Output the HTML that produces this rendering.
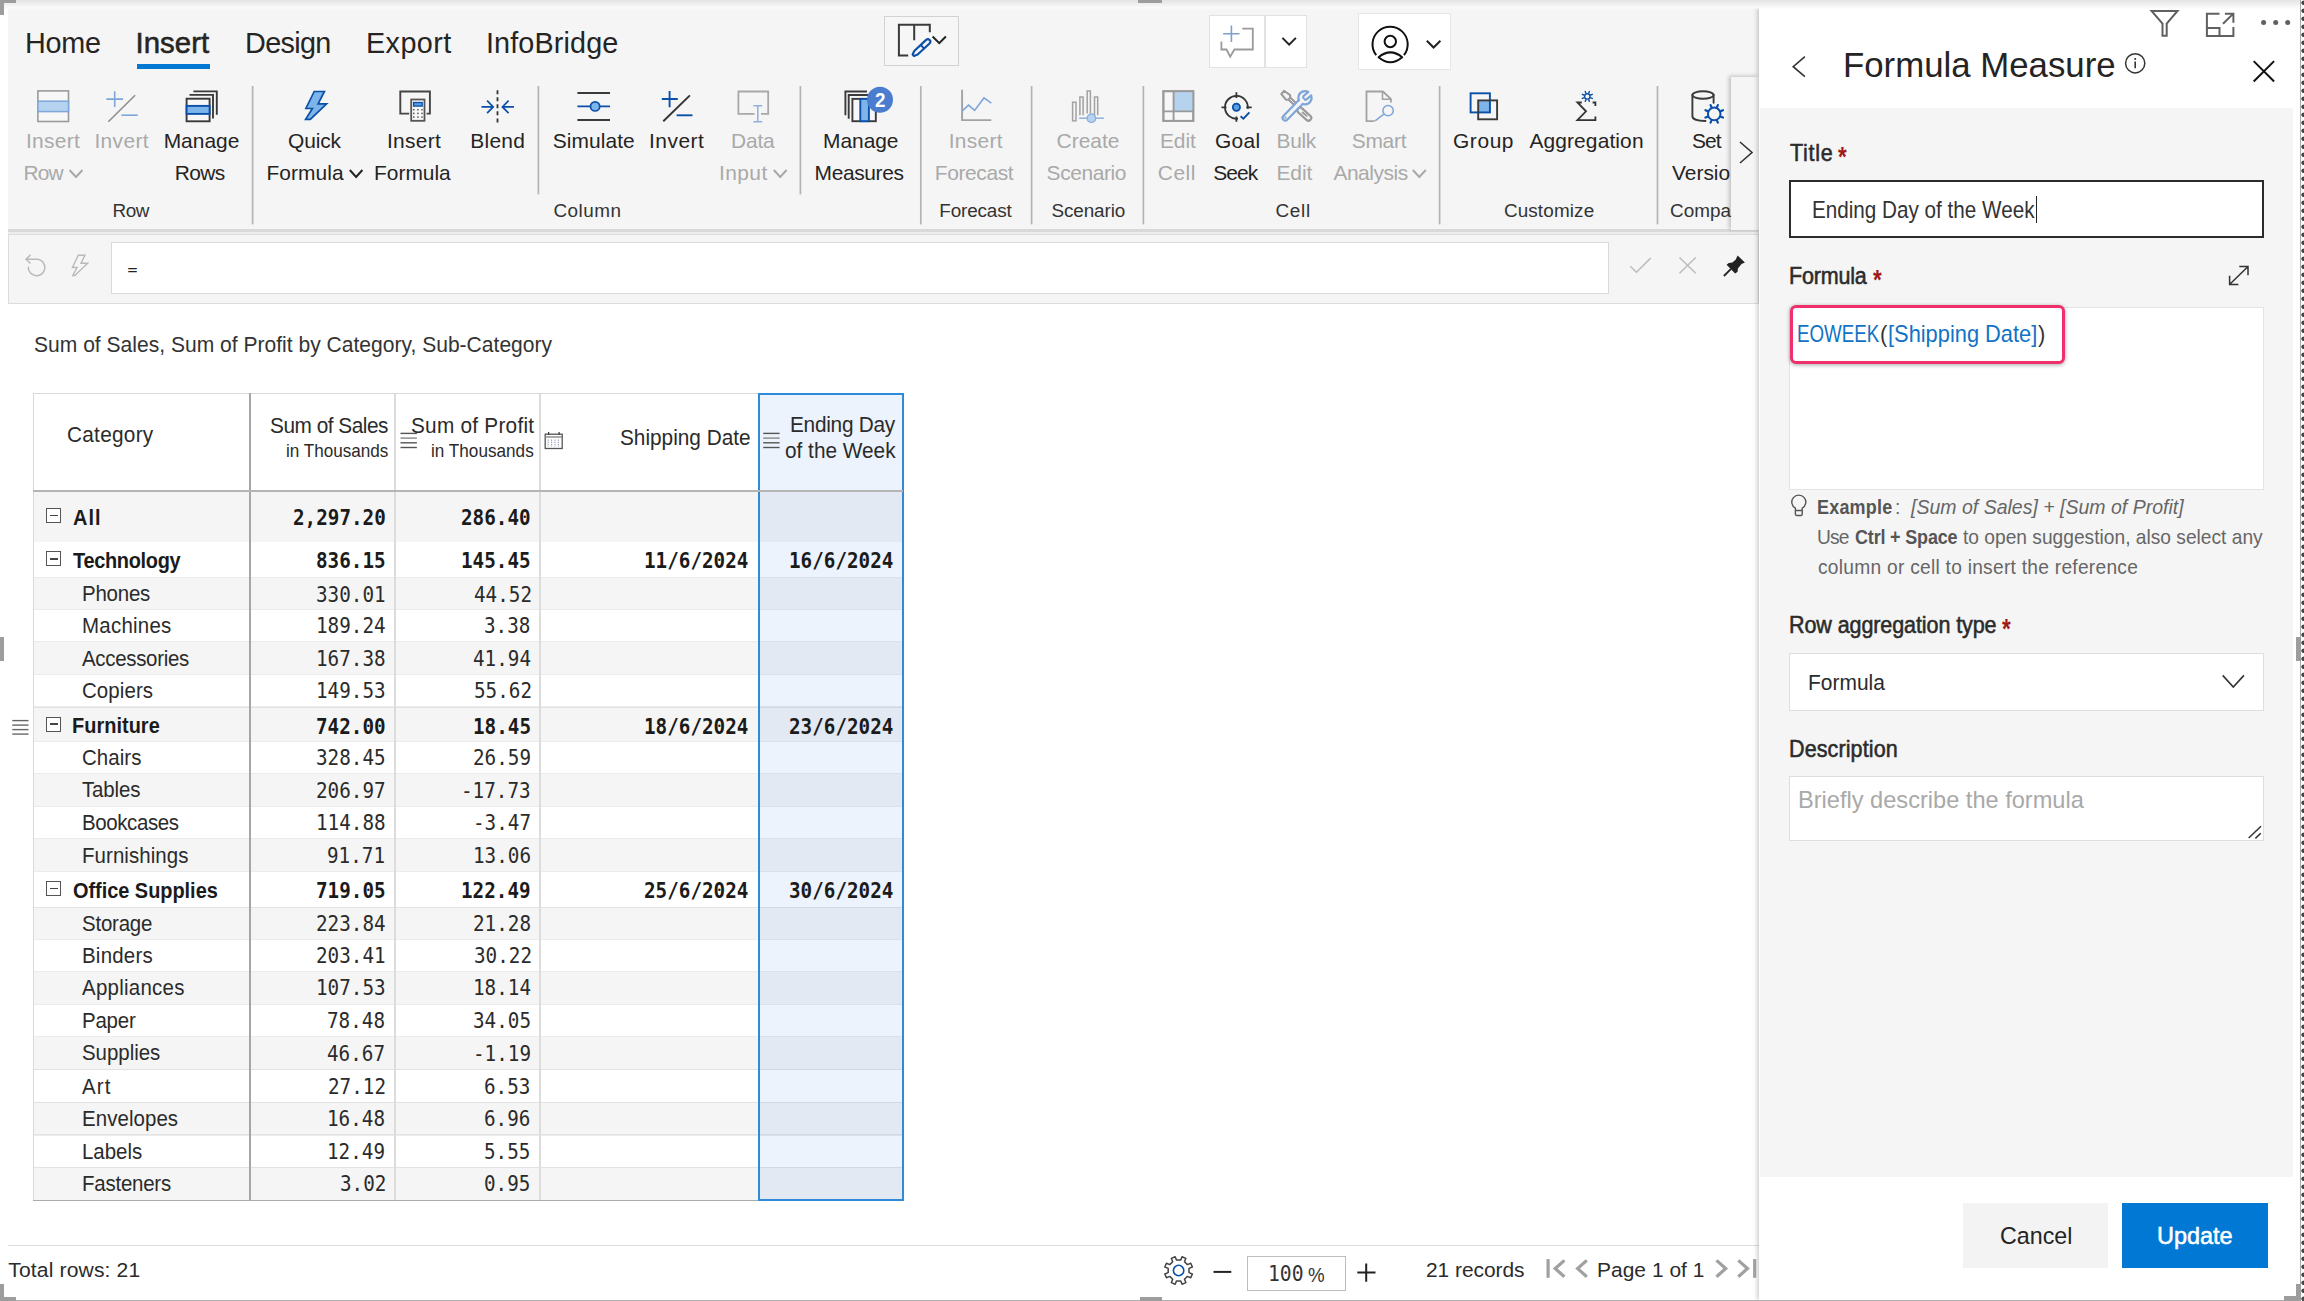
<!DOCTYPE html>
<html lang="en"><head><meta charset="utf-8"><title>Formula Measure</title>
<style>
html,body{margin:0;padding:0;background:#fff;}
body{width:2304px;height:1301px;overflow:hidden;font-family:"Liberation Sans",sans-serif;}
#root{position:relative;width:2304px;height:1301px;overflow:hidden;background:#fff;}
#root div{position:absolute;box-sizing:border-box;}
#ico{position:absolute;left:0;top:0;}
.t{white-space:nowrap;line-height:1;transform-origin:0 50%;}
.sep{width:1.6px;background:#c4c4c4;}
.hd{background:#9d9d9d;}

</style></head>
<body>
<div id="root">
<!-- top inner shadow -->
<div style="left:0;top:0;width:2304px;height:9.5px;background:linear-gradient(#e4e4e4,#efefef 40%,#fafafa 75%,#fff);"></div>
<!-- ribbon -->
<div id="ribbon" style="left:7.5px;top:6.5px;width:1751.5px;height:223.5px;background:#f5f5f5;"></div>
<div style="left:7.5px;top:229px;width:1751.5px;height:2.5px;background:#d9d9d9;"></div>
<div style="left:7.5px;top:231.5px;width:1751.5px;height:2px;background:#ececec;"></div>
<!-- formula bar -->
<div id="fbar" style="left:7.5px;top:233.5px;width:1751.5px;height:70px;background:#f5f5f5;border:1.5px solid #dcdcdc;"></div>
<div id="finput" style="left:110.5px;top:242px;width:1498px;height:52px;background:#fff;border:1.5px solid #dadada;"></div>
<!-- ribbon separators -->
<!-- tab underline -->
<div style="left:137px;top:63.5px;width:72.5px;height:5px;background:#0078d4;"></div>
<!-- top buttons -->
<div style="left:884px;top:16px;width:75px;height:49.5px;border:1.5px solid #d2d2d2;background:#f6f6f6;"></div>
<div style="left:1208.5px;top:15px;width:98px;height:52.8px;border:1.5px solid #e2e2e2;background:#fff;"></div>
<div style="left:1264px;top:16px;width:1.5px;height:51px;background:#e2e2e2;"></div>
<div style="left:1358px;top:13px;width:93px;height:57px;border:1.5px solid #e6e6e6;background:#fff;"></div>
<!-- ribbon scroll arrow -->
<div style="left:1731px;top:77px;width:28px;height:153px;background:#f5f5f5;box-shadow:-2px -1px 4px rgba(0,0,0,.22);"></div>
<!-- table -->
<div style="left:33.2px;top:393.2px;width:870.3px;height:807.3999999999999px;background:#fff;"></div>
<div style="left:33.2px;top:491.9px;width:870.3px;height:50.0px;background:#f5f5f5;"></div>
<div style="left:46.4px;top:507.8px;width:15px;height:15px;border:1.6px solid #555;background:#fff;"></div>
<div style="left:50.2px;top:514.5px;width:7.4px;height:1.6px;background:#444;"></div>
<div style="left:46.4px;top:551.4px;width:15px;height:15px;border:1.6px solid #555;background:#fff;"></div>
<div style="left:50.2px;top:558.1px;width:7.4px;height:1.6px;background:#444;"></div>
<div style="left:33.2px;top:577.6px;width:870.3px;height:31.6px;background:#f5f5f5;"></div>
<div style="left:33.2px;top:577.0px;width:870.3px;height:1.3px;background:rgba(0,0,0,.075);"></div>
<div style="left:33.2px;top:608.6px;width:870.3px;height:1.3px;background:rgba(0,0,0,.075);"></div>
<div style="left:33.2px;top:641.8px;width:870.3px;height:32.6px;background:#f5f5f5;"></div>
<div style="left:33.2px;top:641.2px;width:870.3px;height:1.3px;background:rgba(0,0,0,.075);"></div>
<div style="left:33.2px;top:673.8px;width:870.3px;height:1.3px;background:rgba(0,0,0,.075);"></div>
<div style="left:33.2px;top:707px;width:870.3px;height:34.4px;background:#f5f5f5;"></div>
<div style="left:33.2px;top:706.4px;width:870.3px;height:1.3px;background:rgba(0,0,0,.075);"></div>
<div style="left:46.4px;top:716.5px;width:15px;height:15px;border:1.6px solid #555;background:#fff;"></div>
<div style="left:50.2px;top:723.2px;width:7.4px;height:1.6px;background:#444;"></div>
<div style="left:33.2px;top:740.8px;width:870.3px;height:1.3px;background:rgba(0,0,0,.075);"></div>
<div style="left:33.2px;top:773.6px;width:870.3px;height:32.8px;background:#f5f5f5;"></div>
<div style="left:33.2px;top:773.0px;width:870.3px;height:1.3px;background:rgba(0,0,0,.075);"></div>
<div style="left:33.2px;top:805.8px;width:870.3px;height:1.3px;background:rgba(0,0,0,.075);"></div>
<div style="left:33.2px;top:838.7px;width:870.3px;height:32.8px;background:#f5f5f5;"></div>
<div style="left:33.2px;top:838.1px;width:870.3px;height:1.3px;background:rgba(0,0,0,.075);"></div>
<div style="left:33.2px;top:870.9px;width:870.3px;height:1.3px;background:rgba(0,0,0,.075);"></div>
<div style="left:46.4px;top:881.0px;width:15px;height:15px;border:1.6px solid #555;background:#fff;"></div>
<div style="left:50.2px;top:887.7px;width:7.4px;height:1.6px;background:#444;"></div>
<div style="left:33.2px;top:907.3px;width:870.3px;height:31.9px;background:#f5f5f5;"></div>
<div style="left:33.2px;top:906.7px;width:870.3px;height:1.3px;background:rgba(0,0,0,.075);"></div>
<div style="left:33.2px;top:938.6px;width:870.3px;height:1.3px;background:rgba(0,0,0,.075);"></div>
<div style="left:33.2px;top:971.5px;width:870.3px;height:32.8px;background:#f5f5f5;"></div>
<div style="left:33.2px;top:970.9px;width:870.3px;height:1.3px;background:rgba(0,0,0,.075);"></div>
<div style="left:33.2px;top:1003.7px;width:870.3px;height:1.3px;background:rgba(0,0,0,.075);"></div>
<div style="left:33.2px;top:1036.6px;width:870.3px;height:33.2px;background:#f5f5f5;"></div>
<div style="left:33.2px;top:1036.0px;width:870.3px;height:1.3px;background:rgba(0,0,0,.075);"></div>
<div style="left:33.2px;top:1069.2px;width:870.3px;height:1.3px;background:rgba(0,0,0,.075);"></div>
<div style="left:33.2px;top:1102.1px;width:870.3px;height:32.8px;background:#f5f5f5;"></div>
<div style="left:33.2px;top:1101.5px;width:870.3px;height:1.3px;background:rgba(0,0,0,.075);"></div>
<div style="left:33.2px;top:1134.3px;width:870.3px;height:1.3px;background:rgba(0,0,0,.075);"></div>
<div style="left:33.2px;top:1167.2px;width:870.3px;height:32.8px;background:#f5f5f5;"></div>
<div style="left:33.2px;top:1166.6px;width:870.3px;height:1.3px;background:rgba(0,0,0,.075);"></div>
<div style="left:758px;top:393.2px;width:145.5px;height:807.3999999999999px;background:rgba(40,120,215,.085);border:2px solid #2f8bda;"></div>
<div style="left:33.2px;top:393px;width:724.8px;height:1px;background:#d9d9d9;"></div>
<div style="left:33px;top:393.2px;width:1px;height:807.3999999999999px;background:#d9d9d9;"></div>
<div style="left:249px;top:393.2px;width:2px;height:807.3999999999999px;background:#a6a6a6;"></div>
<div style="left:394px;top:393.2px;width:1.5px;height:807.3999999999999px;background:#dcdcdc;"></div>
<div style="left:539.3px;top:393.2px;width:1.5px;height:807.3999999999999px;background:#dcdcdc;"></div>
<div style="left:33.2px;top:490.4px;width:870.3px;height:1.8px;background:#b4b4b4;"></div>
<div style="left:33.2px;top:1199.5px;width:724.8px;height:1.6px;background:#ababab;"></div>
<!-- footer -->
<div style="left:7.5px;top:1244.5px;width:1751.5px;height:1.5px;background:#dedede;"></div>
<div style="left:1247px;top:1255.5px;width:98.5px;height:35.5px;border:1.5px solid #bdbdbd;background:#fff;"></div>
<!-- panel -->
<div id="panel" style="left:1759px;top:6px;width:541px;height:1294px;background:#fff;box-shadow:-1px 0 5px rgba(0,0,0,.25);"></div>
<div style="left:0;top:0;width:2304px;height:9.5px;background:linear-gradient(#e4e4e4,#efefef 40%,#fafafa 75%,rgba(255,255,255,0));"></div>
<div id="pbody" style="left:1760px;top:108px;width:533px;height:1068.5px;background:#f5f5f5;"></div>
<!-- title input -->
<div style="left:1788.5px;top:180px;width:475.5px;height:58px;background:#fff;border:2px solid #2b2b2b;"></div>
<div style="left:2035.5px;top:196px;width:1.5px;height:26.5px;background:#222;"></div>
<!-- formula editor -->
<div style="left:1789px;top:307px;width:474.5px;height:183px;background:#fff;border:1.5px solid #e3e3e3;"></div>
<div style="left:1789.5px;top:305px;width:275.5px;height:58.5px;background:#fff;border:3px solid #f0306a;border-radius:6px;box-shadow:0 1px 4px rgba(0,0,0,.35);"></div>
<!-- select -->
<div style="left:1788.5px;top:653px;width:475.5px;height:57.5px;background:#fff;border:1.5px solid #dedede;"></div>
<!-- textarea -->
<div style="left:1788.5px;top:776px;width:475.5px;height:65px;background:#fff;border:1.5px solid #dedede;"></div>
<!-- buttons -->
<div style="left:1962.5px;top:1202.5px;width:145.5px;height:65px;background:#f3f3f3;"></div>
<div style="left:2122px;top:1202.5px;width:145.5px;height:65px;background:#0078d4;"></div>
<!-- frame edges / handles -->
<div style="left:0;top:1299.5px;width:2304px;height:1.5px;background:#b0b0b0;"></div>
<div style="left:2300px;top:0;width:1.2px;height:1301px;background:#aaa;"></div>
<div style="left:2301px;top:0;width:3px;height:1301px;background:radial-gradient(circle at 2.6px 2.8px,#474747 0,#474747 1.9px,rgba(71,71,71,0) 2.6px) 0 0/3px 8px repeat-y #fff;"></div>
<div class="hd" style="left:1138px;top:0;width:24px;height:2.8px;"></div>
<div class="hd" style="left:1140px;top:1296.7px;width:22px;height:4.3px;"></div>
<div class="hd" style="left:0;top:637.3px;width:3.5px;height:23.7px;"></div>
<div class="hd" style="left:2295.7px;top:637.3px;width:5.2px;height:23.7px;"></div>
<div class="hd" style="left:0;top:0;width:15.7px;height:3px;"></div>
<div class="hd" style="left:0;top:0;width:3.7px;height:14.6px;"></div>
<div class="hd" style="left:0;top:1296.5px;width:15.6px;height:4.5px;"></div>
<div class="hd" style="left:0;top:1284px;width:4.3px;height:17px;"></div>
<div class="hd" style="left:2283.6px;top:1296.3px;width:17.3px;height:4.7px;"></div>
<div class="hd" style="left:2295.6px;top:1284.3px;width:5.3px;height:16.7px;"></div>

<svg id="ico" width="2304" height="1301" viewBox="0 0 2304 1301" fill="none">
<path d="M252.6 86V224.4" stroke="#b4b4b4" stroke-width="1.7"/>
<path d="M920.8 86V224.4" stroke="#b4b4b4" stroke-width="1.7"/>
<path d="M1031.6 86V224.4" stroke="#b4b4b4" stroke-width="1.7"/>
<path d="M1143.4 86V224.4" stroke="#b4b4b4" stroke-width="1.7"/>
<path d="M1439.6 86V224.4" stroke="#b4b4b4" stroke-width="1.7"/>
<path d="M1657.5 86V224.4" stroke="#b4b4b4" stroke-width="1.7"/>
<path d="M538.4 86V194.4" stroke="#b4b4b4" stroke-width="1.7"/>
<path d="M800.4 86V194.4" stroke="#b4b4b4" stroke-width="1.7"/>
<rect x="37.9" y="90.9" width="30.6" height="30.6" fill="#f7f7f7" stroke="#9a9a9a" stroke-width="1.6"/>
<rect x="37.9" y="101.2" width="30.6" height="10.4" fill="#b5d3ee" stroke="#7ea6d8" stroke-width="1.5"/>
<path d="M106.4 99.1H123M114.7 91.2V107" stroke="#7ea6d8" stroke-width="1.6"/>
<path d="M108.3 121.7L135.1 95.3" stroke="#8f8f8f" stroke-width="1.6"/>
<path d="M121.4 115.2H137.7" stroke="#7ea6d8" stroke-width="1.6"/>
<path d="M193.4 91.4H216.8V114.8" stroke="#3a3a3a" stroke-width="1.9"/>
<path d="M189.5 94.9H213V118.4" stroke="#3a3a3a" stroke-width="1.9"/>
<rect x="186.6" y="98.7" width="23" height="22.6" fill="#f7f7f7" stroke="#3a3a3a" stroke-width="1.9"/>
<rect x="186.6" y="105.9" width="23" height="8" fill="#7db4ea" stroke="#0a4fa8" stroke-width="1.9"/>
<path d="M314.2 91.5H324.4L318.1 103.8H326.6L310.3 119.4H305.6L312.4 108.5H305.9Z" fill="#7db4ea" stroke="#0a4fa8" stroke-width="1.7" stroke-linejoin="miter"/>
<path d="M409.2 113.6H400.3V91.5H429.9V113.6H426.6" stroke="#444" stroke-width="1.9"/>
<rect x="411.2" y="99.5" width="13.3" height="21.3" fill="#f8f8f8" stroke="#555" stroke-width="1.8"/>
<rect x="413.6" y="102.5" width="8.6" height="3.6" fill="#5b9be0" stroke="#0a4fa8" stroke-width="1.3"/>
<rect x="413.05" y="108.95" width="1.5" height="1.5" fill="#555"/>
<rect x="417.15" y="108.95" width="1.5" height="1.5" fill="#555"/>
<rect x="421.25" y="108.95" width="1.5" height="1.5" fill="#555"/>
<rect x="413.05" y="112.65" width="1.5" height="1.5" fill="#555"/>
<rect x="417.15" y="112.65" width="1.5" height="1.5" fill="#555"/>
<rect x="421.25" y="112.65" width="1.5" height="1.5" fill="#555"/>
<rect x="413.05" y="116.35" width="1.5" height="1.5" fill="#555"/>
<rect x="417.15" y="116.35" width="1.5" height="1.5" fill="#555"/>
<rect x="421.25" y="116.35" width="1.5" height="1.5" fill="#555"/>
<path d="M497.5 90.2V122.5" stroke="#333" stroke-width="1.8" stroke-dasharray="4 3.05"/>
<path d="M481.5 106.9H493M487.1 100.7L493.2 106.9L487.1 113.1" stroke="#0a4fa8" stroke-width="1.7"/>
<path d="M514 106.9H502.5M508.6 100.7L502.4 106.9L508.6 113.1" stroke="#0a4fa8" stroke-width="1.7"/>
<path d="M577.4 92.9H610M577.4 119.9H610" stroke="#3a3a3a" stroke-width="2"/>
<path d="M577.4 106.4H610" stroke="#0a4fa8" stroke-width="1.8"/>
<circle cx="595.1" cy="106.4" r="4.6" fill="#7db4ea" stroke="#0a4fa8" stroke-width="1.7"/>
<path d="M661.8 99.05H677.8M669.6 91.1V107.3" stroke="#0a4fa8" stroke-width="1.9"/>
<path d="M663.3 121.3L689.9 95.4" stroke="#333" stroke-width="1.9"/>
<path d="M676.6 115.3H692.5" stroke="#0a4fa8" stroke-width="1.9"/>
<path d="M754.5 113.9H738.4V91.5H768.2V113.9H761" stroke="#a8a8a8" stroke-width="1.8"/>
<path d="M757.8 105.6V121.8M753.4 105.8H762.2M753.4 121.7H762.2" stroke="#8fb0dc" stroke-width="1.5"/>
<path d="M845.4 115.3V91.5H867" stroke="#3a3a3a" stroke-width="1.9"/>
<path d="M848.7 118.7V95H870" stroke="#3a3a3a" stroke-width="1.9"/>
<rect x="852.4" y="98.9" width="23.4" height="22.3" fill="#f7f7f7" stroke="#3a3a3a" stroke-width="1.9"/>
<rect x="860.3" y="98.9" width="8.6" height="22.3" fill="#7db4ea" stroke="#0a4fa8" stroke-width="1.9"/>
<circle cx="880" cy="99.7" r="13" fill="#4a7dcf"/>
<path d="M962.1 89.8V120.1H991.3" stroke="#a2a2a2" stroke-width="1.9"/>
<path d="M962.1 111.1L968.5 105.1L974.6 110.4L984 97.9L991.3 103.2" stroke="#7ea6d8" stroke-width="1.6"/>
<rect x="1072.6" y="102.2" width="3.4" height="18.6" stroke="#a2a2a2" stroke-width="1.5"/>
<path d="M1079.9 115.2V97H1083.1V115.2" stroke="#a2a2a2" stroke-width="1.5"/>
<path d="M1087.2 113.5V91H1090.4V113.5" stroke="#a2a2a2" stroke-width="1.5"/>
<path d="M1094.5 115.2V97H1097.7V115.2" stroke="#a2a2a2" stroke-width="1.5"/>
<path d="M1079.2 118.2H1103.9" stroke="#8fb0dc" stroke-width="1.5"/>
<circle cx="1091.4" cy="118.2" r="4.2" fill="#b5d3ee" stroke="#8fb0dc" stroke-width="1.4"/>
<rect x="1163.4" y="91.2" width="29.9" height="29.7" fill="#f7f7f7" stroke="#9a9a9a" stroke-width="1.9"/>
<rect x="1173.6" y="91.2" width="19.7" height="20.2" fill="#b5d3ee"/>
<path d="M1173.6 91.2V120.9M1163.4 111.4H1193.3" stroke="#9a9a9a" stroke-width="1.9"/>
<rect x="1163.4" y="91.2" width="29.9" height="29.7" stroke="#9a9a9a" stroke-width="1.9"/>
<path d="M1238 118.6A11.4 11.4 0 1 1 1247.7 108.9" stroke="#333" stroke-width="1.8" transform="rotate(0)"/>
<path d="M1236.4 92.3V98M1221.5 107.3H1226.5M1246.4 107.3H1251.7M1236.4 116.5V121.8" stroke="#333" stroke-width="1.8"/>
<circle cx="1236.4" cy="107.3" r="3.6" fill="#5b9be0" stroke="#0a4fa8" stroke-width="1.8"/>
<path d="M1240.6 116.2L1243.4 118.6L1249.4 112.4" stroke="#0a4fa8" stroke-width="1.9"/>
<path d="M1288.5 97.8L1297.5 106.2" stroke="#9a9a9a" stroke-width="4.6" stroke-linecap="butt"/>
<path d="M1287.5 96.8L1298 106.6" stroke="#f5f5f5" stroke-width="1" stroke-linecap="butt"/>
<path d="M1281.3 94L1284 90.8L1290.1 95.1L1290.3 97.6L1288.4 99.7L1285.9 99.7Z" fill="#f5f5f5" stroke="#9a9a9a" stroke-width="2" stroke-linejoin="round"/>
<path d="M1300.2 110.4L1308.4 117.8" stroke="#9a9a9a" stroke-width="7.8" stroke-linecap="round"/>
<path d="M1300.2 110.4L1308.4 117.8" stroke="#f5f5f5" stroke-width="3.4" stroke-linecap="round"/>
<path d="M1297.2 106L1299.4 108" stroke="#f5f5f5" stroke-width="2.4" stroke-linecap="butt"/>
<path d="M1302.6 112.5L1306.8 115.9" stroke="#9a9a9a" stroke-width="1.8" stroke-linecap="round"/>
<path d="M1285.3 117.8L1300.6 102.2" stroke="#7ea6d8" stroke-width="7.6" stroke-linecap="round"/>
<path d="M1285.3 117.8L1300.6 102.2" stroke="#f5f5f5" stroke-width="3.2" stroke-linecap="round"/>
<path d="M1308.35 92.01A6.6 6.6 0 1 0 1311.18 95.39L1306.79 99.07A2.2 2.2 0 0 1 1303.97 95.69Z" fill="#f5f5f5" stroke="#7ea6d8" stroke-width="2.2" stroke-linejoin="round"/>
<path d="M1298.2 104.7L1302.4 100.4" stroke="#f5f5f5" stroke-width="3.2" stroke-linecap="round"/>
<circle cx="1285.5" cy="117.7" r="1.1" fill="#7ea6d8"/>
<path d="M1374.5 121.2H1366.5V91.5H1382.9L1390.9 99V102.4" stroke="#a2a2a2" stroke-width="1.8"/>
<path d="M1382.5 91.8V99.3H1390.6" stroke="#a2a2a2" stroke-width="1.5"/>
<circle cx="1388.1" cy="110.6" r="5.2" stroke="#7ea6d8" stroke-width="1.5"/>
<path d="M1383.9 114.2L1375.1 120.9" stroke="#7ea6d8" stroke-width="1.5"/>
<rect x="1478.2" y="100.4" width="12.4" height="12.7" fill="#7db4ea"/>
<rect x="1470.6" y="93.3" width="19.3" height="19.1" stroke="#0a4fa8" stroke-width="1.9"/>
<rect x="1478.2" y="100.4" width="18.9" height="18.9" stroke="#3a3a3a" stroke-width="1.9"/>
<path d="M1581.8 102.5H1577.4L1586 111.3L1577.4 120.1H1595.4V116.6M1592.6 102.5H1595.4V106" stroke="#333" stroke-width="1.8" stroke-linejoin="miter"/>
<circle cx="1587.3" cy="96.4" r="2.7" stroke="#0a4fa8" stroke-width="1.4"/><line x1="1590.72" y1="97.82" x2="1592.29" y2="98.47" stroke="#0a4fa8" stroke-width="1.4" stroke-linecap="round"/><line x1="1588.72" y1="99.82" x2="1589.37" y2="101.39" stroke="#0a4fa8" stroke-width="1.4" stroke-linecap="round"/><line x1="1585.88" y1="99.82" x2="1585.23" y2="101.39" stroke="#0a4fa8" stroke-width="1.4" stroke-linecap="round"/><line x1="1583.88" y1="97.82" x2="1582.31" y2="98.47" stroke="#0a4fa8" stroke-width="1.4" stroke-linecap="round"/><line x1="1583.88" y1="94.98" x2="1582.31" y2="94.33" stroke="#0a4fa8" stroke-width="1.4" stroke-linecap="round"/><line x1="1585.88" y1="92.98" x2="1585.23" y2="91.41" stroke="#0a4fa8" stroke-width="1.4" stroke-linecap="round"/><line x1="1588.72" y1="92.98" x2="1589.37" y2="91.41" stroke="#0a4fa8" stroke-width="1.4" stroke-linecap="round"/><line x1="1590.72" y1="94.98" x2="1592.29" y2="94.33" stroke="#0a4fa8" stroke-width="1.4" stroke-linecap="round"/>
<ellipse cx="1703" cy="95" rx="10.6" ry="3.8" stroke="#3a3a3a" stroke-width="1.9"/>
<path d="M1692.4 95V116.2C1692.4 118.8 1697 120.9 1705.5 121" stroke="#3a3a3a" stroke-width="1.9" stroke-linecap="round"/>
<path d="M1713.6 95V102.8" stroke="#3a3a3a" stroke-width="1.9" stroke-linecap="round"/>
<circle cx="1714.2" cy="113.9" r="6.3" stroke="#0a4fa8" stroke-width="2.0"/><line x1="1720.85" y1="116.66" x2="1722.98" y2="117.54" stroke="#0a4fa8" stroke-width="2.2" stroke-linecap="round"/><line x1="1716.96" y1="120.55" x2="1717.84" y2="122.68" stroke="#0a4fa8" stroke-width="2.2" stroke-linecap="round"/><line x1="1711.44" y1="120.55" x2="1710.56" y2="122.68" stroke="#0a4fa8" stroke-width="2.2" stroke-linecap="round"/><line x1="1707.55" y1="116.66" x2="1705.42" y2="117.54" stroke="#0a4fa8" stroke-width="2.2" stroke-linecap="round"/><line x1="1707.55" y1="111.14" x2="1705.42" y2="110.26" stroke="#0a4fa8" stroke-width="2.2" stroke-linecap="round"/><line x1="1711.44" y1="107.25" x2="1710.56" y2="105.12" stroke="#0a4fa8" stroke-width="2.2" stroke-linecap="round"/><line x1="1716.96" y1="107.25" x2="1717.84" y2="105.12" stroke="#0a4fa8" stroke-width="2.2" stroke-linecap="round"/><line x1="1720.85" y1="111.14" x2="1722.98" y2="110.26" stroke="#0a4fa8" stroke-width="2.2" stroke-linecap="round"/>
<polyline points="69.5,170 76.0,177 82.5,170" stroke="#a9a9a9" stroke-width="2" stroke-linecap="butt" stroke-linejoin="miter"/>
<polyline points="349.8,170 356.1,177 362.4,170" stroke="#252423" stroke-width="2" stroke-linecap="butt" stroke-linejoin="miter"/>
<polyline points="773.8,170 780.2,177 786.6,170" stroke="#a9a9a9" stroke-width="2" stroke-linecap="butt" stroke-linejoin="miter"/>
<polyline points="1412.8,170 1419.3,177 1425.8,170" stroke="#a9a9a9" stroke-width="2" stroke-linecap="butt" stroke-linejoin="miter"/>
<polyline points="1740,142 1752,152.5 1740,163" stroke="#333" stroke-width="1.6"/>
<path d="M908.2 55.6H898.9V24.8H929.8V32.2M914.2 24.8V40.2" stroke="#3a3a3a" stroke-width="2"/>
<g transform="translate(912.6,55.9) rotate(-43)"><path d="M4.6 -2.5L20.8 -2.5A2.5 2.5 0 0 1 20.8 2.5L4.6 2.5L0.9 1L0.9 -1Z" fill="#f5f5f5" stroke="#0a4fa8" stroke-width="2.1" stroke-linejoin="round"/><path d="M13.4 -2.5V2.5" stroke="#0a4fa8" stroke-width="2"/></g>
<polyline points="932.6,36.5 939.25,43.2 945.9,36.5" stroke="#222" stroke-width="2" stroke-linecap="butt" stroke-linejoin="miter"/>
<path d="M1223.1 33.7H1239.5M1231.4 25.5V41.9" stroke="#7f9fd0" stroke-width="1.6"/>
<path d="M1242.3 28.6H1252.8V49.5H1234.4L1230.2 56.7L1226.5 49.5H1221.4V41.6" stroke="#9a9a9a" stroke-width="1.8"/>
<polyline points="1282.4,37.9 1289.15,44.7 1295.9,37.9" stroke="#222" stroke-width="2" stroke-linecap="butt" stroke-linejoin="miter"/>
<path d="M1376.23 55.14A17.6 17.6 0 1 1 1403.97 55.14" stroke="#111" stroke-width="2"/>
<circle cx="1390.3" cy="41.5" r="5.7" stroke="#111" stroke-width="2"/>
<path d="M1378.6 57.2Q1390.3 47.6 1402.2 57.2Q1390.3 67.2 1378.6 57.2Z" stroke="#111" stroke-width="2" stroke-linejoin="round"/>
<polyline points="1426.8,40.7 1433.6,47.5 1440.4,40.7" stroke="#222" stroke-width="2" stroke-linecap="butt" stroke-linejoin="miter"/>
<path d="M28.3 266.8A8.3 8.3 0 1 0 37.5 259.2H26.2M30.6 254.8L26 259.2L30.6 263.5" stroke="#b9b9b9" stroke-width="1.5"/>
<path d="M78.3 255.2H84.9L81 263.2H87.7L74.8 275.5H72.8L77.1 267.5H72.4Z" stroke="#b9b9b9" stroke-width="1.4"/>
<path d="M1630.3 266.3L1636.4 272.3L1650.7 258.1" stroke="#bcbcbc" stroke-width="1.5"/>
<path d="M1679.5 257.5L1695.7 273.3M1695.7 257.5L1679.5 273.3" stroke="#bcbcbc" stroke-width="1.5"/>
<path d="M1737.6 255.6L1744.9 262.6L1741.5 264.1L1737.9 268.4L1737.6 271.7L1735.1 273.6L1726.6 264.7L1728.8 262.9L1732.4 262.6L1735.8 259.6Z" fill="#222"/>
<path d="M1731 268.8L1723.9 276" stroke="#222" stroke-width="1.8"/>
<path d="M400.5 433.4H416.9" stroke="#555" stroke-width="1.4"/><path d="M400.5 438.1H416.9" stroke="#888" stroke-width="1.4"/><path d="M400.5 442.8H416.9" stroke="#555" stroke-width="1.4"/><path d="M400.5 447.5H416.9" stroke="#555" stroke-width="1.4"/>
<path d="M763.2 433.4H779.6" stroke="#555" stroke-width="1.4"/><path d="M763.2 438.1H779.6" stroke="#888" stroke-width="1.4"/><path d="M763.2 442.8H779.6" stroke="#555" stroke-width="1.4"/><path d="M763.2 447.5H779.6" stroke="#555" stroke-width="1.4"/>
<rect x="545.2" y="434.2" width="17" height="14.3" fill="#fff" stroke="#555" stroke-width="1.3"/>
<path d="M545.2 437H562.2" stroke="#888" stroke-width="1.4"/>
<path d="M548.6 432.1V435M559.1 432.1V435" stroke="#444" stroke-width="1.3"/>
<path d="M548.2 439.5V446.8" stroke="#8892b0" stroke-width="1" stroke-dasharray="1.3 1"/>
<path d="M551.6 439.5V446.8" stroke="#8892b0" stroke-width="1" stroke-dasharray="1.3 1"/>
<path d="M555 439.5V446.8" stroke="#8892b0" stroke-width="1" stroke-dasharray="1.3 1"/>
<path d="M558.4 439.5V446.8" stroke="#8892b0" stroke-width="1" stroke-dasharray="1.3 1"/>
<path d="M12.3 720.6H28.5" stroke="#666" stroke-width="1.4"/>
<path d="M12.3 725.1H28.5" stroke="#666" stroke-width="1.4"/>
<path d="M12.3 729.6H28.5" stroke="#666" stroke-width="1.4"/>
<path d="M12.3 734.1H28.5" stroke="#666" stroke-width="1.4"/>
<path d="M1189.00 1272.57L1192.37 1273.95L1190.78 1277.80L1187.41 1276.39L1184.49 1279.31L1185.90 1282.68L1182.05 1284.27L1180.67 1280.90L1176.53 1280.90L1175.15 1284.27L1171.30 1282.68L1172.71 1279.31L1169.79 1276.39L1166.42 1277.80L1164.83 1273.95L1168.20 1272.57L1168.20 1268.43L1164.83 1267.05L1166.42 1263.20L1169.79 1264.61L1172.71 1261.69L1171.30 1258.32L1175.15 1256.73L1176.53 1260.10L1180.67 1260.10L1182.05 1256.73L1185.90 1258.32L1184.49 1261.69L1187.41 1264.61L1190.78 1263.20L1192.37 1267.05L1189.00 1268.43Z" stroke="#444" stroke-width="1.5" stroke-linejoin="round"/>
<circle cx="1178.6" cy="1270.5" r="5.2" stroke="#0a4fa8" stroke-width="1.6"/>
<path d="M1213.5 1271.9H1231.3" stroke="#222" stroke-width="2"/>
<path d="M1357.3 1272.6H1375.5M1366.2 1263.5V1281.7" stroke="#222" stroke-width="2"/>
<path d="M1548.1 1259.1V1277.8" stroke="#a0a0a0" stroke-width="3.2"/>
<polyline points="1564.4,1260.4 1555.2,1268.5 1564.4,1276.8" stroke="#a0a0a0" stroke-width="3.2"/>
<polyline points="1586.8,1260.4 1577.6,1268.5 1586.8,1276.8" stroke="#a0a0a0" stroke-width="3.2"/>
<polyline points="1716.5,1260.4 1725.7,1268.5 1716.5,1276.8" stroke="#a0a0a0" stroke-width="3.2"/>
<polyline points="1738.3,1260.4 1747.5,1268.5 1738.3,1276.8" stroke="#a0a0a0" stroke-width="3.2"/>
<path d="M1754.7 1259.1V1277.8" stroke="#a0a0a0" stroke-width="3.2"/>
<path d="M2151.6 11H2177.5L2166.7 23.6V35.7H2162.5V23.6Z" stroke="#606060" stroke-width="2" stroke-linejoin="miter"/>
<path d="M2219.5 13.8H2206.9V36.1H2233.4V26.9M2206.9 28H2219.5V36.1" stroke="#606060" stroke-width="2"/>
<path d="M2223 23.8L2232.6 14.4M2224.9 13.8H2233.4V22.7" stroke="#606060" stroke-width="2"/>
<circle cx="2263.6" cy="22.5" r="2.5" fill="#606060"/>
<circle cx="2275.7" cy="22.5" r="2.5" fill="#606060"/>
<circle cx="2287.7" cy="22.5" r="2.5" fill="#606060"/>
<polyline points="1804.9,56.7 1793.2,66.7 1804.9,76.7" stroke="#333" stroke-width="1.6"/>
<circle cx="2135.2" cy="63.3" r="9.6" stroke="#333" stroke-width="1.5"/>
<path d="M2135.2 61.6V68.2" stroke="#333" stroke-width="1.6"/><circle cx="2135.2" cy="59" r="1" fill="#333"/>
<path d="M2253.7 61.1L2274.1 81.5M2274.1 61.1L2253.7 81.5" stroke="#111" stroke-width="2"/>
<path d="M2229.8 284.3L2247.8 266.7M2239.3 266.5H2248V275.3M2229.6 275.7V284.5H2238.4" stroke="#333" stroke-width="1.5"/>
<path d="M1795.4 510.2V508.2A7 7 0 1 1 1802.2 508.2V510.2M1795.4 510.5H1802.2V514.2A1.3 1.3 0 0 1 1800.9 515.5H1796.7A1.3 1.3 0 0 1 1795.4 514.2Z" stroke="#555" stroke-width="1.4"/>
<polyline points="2222.7,675.4 2233.3,687 2243.9,675.4" stroke="#333" stroke-width="1.6" stroke-linecap="butt" stroke-linejoin="miter"/>
<path d="M2248.7 838L2261 826.2M2255.4 838.4L2260.8 833.2" stroke="#333" stroke-width="1.5"/>
</svg>
<div class="t" style="left:24.6px;top:27.6px;font-size:29.36px;color:#252423;letter-spacing:-0.23px;transform:scaleX(0.980);">Home</div>
<div class="t" style="left:135.5px;top:27.6px;font-size:29.36px;color:#252423;-webkit-text-stroke:0.55px #252423;letter-spacing:0.05px;">Insert</div>
<div class="t" style="left:244.9px;top:27.6px;font-size:29.36px;color:#252423;letter-spacing:-0.66px;transform:scaleX(0.980);">Design</div>
<div class="t" style="left:366.0px;top:27.6px;font-size:29.36px;color:#252423;letter-spacing:0.44px;transform:scaleX(0.980);">Export</div>
<div class="t" style="left:486.3px;top:27.6px;font-size:29.36px;color:#252423;letter-spacing:0.13px;transform:scaleX(0.980);">InfoBridge</div>
<div class="t" style="left:26.0px;top:131.1px;font-size:20.93px;color:#a9a9a9;letter-spacing:0.31px;">Insert</div>
<div class="t" style="left:23.6px;top:163.0px;font-size:20.93px;color:#a9a9a9;letter-spacing:-0.90px;">Row</div>
<div class="t" style="left:94.4px;top:131.1px;font-size:20.93px;color:#a9a9a9;letter-spacing:0.37px;">Invert</div>
<div class="t" style="left:163.7px;top:131.1px;font-size:20.93px;color:#252423;">Manage</div>
<div class="t" style="left:174.7px;top:163.0px;font-size:20.93px;color:#252423;letter-spacing:-0.63px;">Rows</div>
<div class="t" style="left:288.0px;top:131.1px;font-size:20.93px;color:#252423;letter-spacing:-0.14px;">Quick</div>
<div class="t" style="left:266.5px;top:163.0px;font-size:20.93px;color:#252423;letter-spacing:0.05px;">Formula</div>
<div class="t" style="left:387.0px;top:131.1px;font-size:20.93px;color:#252423;letter-spacing:0.31px;">Insert</div>
<div class="t" style="left:374.0px;top:163.0px;font-size:20.93px;color:#252423;">Formula</div>
<div class="t" style="left:470.3px;top:131.1px;font-size:20.93px;color:#252423;letter-spacing:0.27px;">Blend</div>
<div class="t" style="left:552.8px;top:131.1px;font-size:20.93px;color:#252423;letter-spacing:0.08px;">Simulate</div>
<div class="t" style="left:649.0px;top:131.1px;font-size:20.93px;color:#252423;letter-spacing:0.51px;">Invert</div>
<div class="t" style="left:731.0px;top:131.1px;font-size:20.93px;color:#a9a9a9;letter-spacing:-0.17px;">Data</div>
<div class="t" style="left:719.0px;top:163.0px;font-size:20.93px;color:#a9a9a9;letter-spacing:0.43px;">Input</div>
<div class="t" style="left:823.0px;top:131.1px;font-size:20.93px;color:#252423;letter-spacing:-0.02px;">Manage</div>
<div class="t" style="left:814.6px;top:163.0px;font-size:20.93px;color:#252423;letter-spacing:-0.36px;">Measures</div>
<div class="t" style="left:948.7px;top:131.1px;font-size:20.93px;color:#a9a9a9;letter-spacing:0.29px;">Insert</div>
<div class="t" style="left:934.8px;top:163.0px;font-size:20.93px;color:#a9a9a9;letter-spacing:-0.38px;">Forecast</div>
<div class="t" style="left:1056.5px;top:131.1px;font-size:20.93px;color:#a9a9a9;letter-spacing:0.04px;">Create</div>
<div class="t" style="left:1046.6px;top:163.0px;font-size:20.93px;color:#a9a9a9;letter-spacing:-0.38px;">Scenario</div>
<div class="t" style="left:1160.0px;top:131.1px;font-size:20.93px;color:#a9a9a9;letter-spacing:-0.10px;">Edit</div>
<div class="t" style="left:1157.8px;top:163.0px;font-size:20.93px;color:#a9a9a9;letter-spacing:0.52px;">Cell</div>
<div class="t" style="left:1215.0px;top:131.1px;font-size:20.93px;color:#252423;letter-spacing:0.34px;">Goal</div>
<div class="t" style="left:1213.2px;top:163.0px;font-size:20.93px;color:#252423;letter-spacing:-0.90px;">Seek</div>
<div class="t" style="left:1276.5px;top:131.1px;font-size:20.93px;color:#a9a9a9;letter-spacing:-0.30px;">Bulk</div>
<div class="t" style="left:1276.5px;top:163.0px;font-size:20.93px;color:#a9a9a9;letter-spacing:-0.10px;">Edit</div>
<div class="t" style="left:1351.7px;top:131.1px;font-size:20.93px;color:#a9a9a9;letter-spacing:-0.25px;">Smart</div>
<div class="t" style="left:1333.4px;top:163.0px;font-size:20.93px;color:#a9a9a9;letter-spacing:-0.45px;">Analysis</div>
<div class="t" style="left:1453.0px;top:131.1px;font-size:20.93px;color:#252423;letter-spacing:0.59px;">Group</div>
<div class="t" style="left:1529.4px;top:131.1px;font-size:20.93px;color:#252423;letter-spacing:0.13px;">Aggregation</div>
<div class="t" style="left:1691.9px;top:131.1px;font-size:20.93px;color:#252423;letter-spacing:-0.90px;">Set</div>
<div class="t" style="left:1672.0px;top:163.0px;font-size:20.93px;color:#252423;">Versio</div>
<div class="t" style="left:112.4px;top:201.9px;font-size:18.9px;color:#333;letter-spacing:-0.35px;">Row</div>
<div class="t" style="left:553.4px;top:201.9px;font-size:18.9px;color:#333;letter-spacing:0.52px;">Column</div>
<div class="t" style="left:939.3px;top:201.9px;font-size:18.9px;color:#333;letter-spacing:-0.15px;">Forecast</div>
<div class="t" style="left:1051.5px;top:201.9px;font-size:18.9px;color:#333;letter-spacing:-0.12px;">Scenario</div>
<div class="t" style="left:1275.5px;top:201.9px;font-size:18.9px;color:#333;letter-spacing:0.70px;">Cell</div>
<div class="t" style="left:1503.9px;top:201.9px;font-size:18.9px;color:#333;letter-spacing:0.13px;">Customize</div>
<div class="t" style="left:1670.0px;top:201.9px;font-size:18.9px;color:#333;">Compa</div>
<div class="t" style="left:127.6px;top:262.2px;font-size:16.5px;color:#222;font-family:'DejaVu Sans Mono', 'Liberation Mono', monospace;">=</div>
<div class="t" style="left:33.7px;top:334.4px;font-size:21.8px;color:#333;transform:scaleX(0.966);">Sum of Sales, Sum of Profit by Category, Sub-Category</div>
<div class="t" style="left:73.0px;top:506.7px;font-size:21.8px;color:#1b1b1b;font-weight:700;letter-spacing:1.08px;transform:scaleX(0.915);">All</div>
<div class="t" style="left:292.6px;top:506.8px;font-size:21.1px;color:#1b1b1b;font-weight:700;font-family:'DejaVu Sans Mono', 'Liberation Mono', monospace;transform:scaleX(0.913);">2,297.20</div>
<div class="t" style="left:461.1px;top:506.8px;font-size:21.1px;color:#1b1b1b;font-weight:700;font-family:'DejaVu Sans Mono', 'Liberation Mono', monospace;transform:scaleX(0.913);">286.40</div>
<div class="t" style="left:73.0px;top:550.3px;font-size:21.8px;color:#1b1b1b;font-weight:700;letter-spacing:-0.34px;transform:scaleX(0.915);">Technology</div>
<div class="t" style="left:315.8px;top:550.4px;font-size:21.1px;color:#1b1b1b;font-weight:700;font-family:'DejaVu Sans Mono', 'Liberation Mono', monospace;transform:scaleX(0.913);">836.15</div>
<div class="t" style="left:461.1px;top:550.4px;font-size:21.1px;color:#1b1b1b;font-weight:700;font-family:'DejaVu Sans Mono', 'Liberation Mono', monospace;transform:scaleX(0.913);">145.45</div>
<div class="t" style="left:643.7px;top:550.4px;font-size:21.1px;color:#1b1b1b;font-weight:700;font-family:'DejaVu Sans Mono', 'Liberation Mono', monospace;transform:scaleX(0.913);">11/6/2024</div>
<div class="t" style="left:788.8px;top:550.4px;font-size:21.1px;color:#1b1b1b;font-weight:700;font-family:'DejaVu Sans Mono', 'Liberation Mono', monospace;transform:scaleX(0.913);">16/6/2024</div>
<div class="t" style="left:81.5px;top:583.4px;font-size:21.8px;color:#2b2b2b;letter-spacing:-0.23px;transform:scaleX(0.938);">Phones</div>
<div class="t" style="left:315.8px;top:583.5px;font-size:21.1px;color:#2b2b2b;font-family:'DejaVu Sans Mono', 'Liberation Mono', monospace;transform:scaleX(0.913);">330.01</div>
<div class="t" style="left:473.6px;top:583.5px;font-size:21.1px;color:#2b2b2b;font-family:'DejaVu Sans Mono', 'Liberation Mono', monospace;transform:scaleX(0.913);">44.52</div>
<div class="t" style="left:81.5px;top:615.0px;font-size:21.8px;color:#2b2b2b;letter-spacing:0.28px;transform:scaleX(0.938);">Machines</div>
<div class="t" style="left:315.8px;top:615.1px;font-size:21.1px;color:#2b2b2b;font-family:'DejaVu Sans Mono', 'Liberation Mono', monospace;transform:scaleX(0.913);">189.24</div>
<div class="t" style="left:484.3px;top:615.1px;font-size:21.1px;color:#2b2b2b;font-family:'DejaVu Sans Mono', 'Liberation Mono', monospace;transform:scaleX(0.913);">3.38</div>
<div class="t" style="left:82.4px;top:647.6px;font-size:21.8px;color:#2b2b2b;letter-spacing:-0.32px;transform:scaleX(0.938);">Accessories</div>
<div class="t" style="left:315.8px;top:647.6px;font-size:21.1px;color:#2b2b2b;font-family:'DejaVu Sans Mono', 'Liberation Mono', monospace;transform:scaleX(0.913);">167.38</div>
<div class="t" style="left:472.7px;top:647.6px;font-size:21.1px;color:#2b2b2b;font-family:'DejaVu Sans Mono', 'Liberation Mono', monospace;transform:scaleX(0.913);">41.94</div>
<div class="t" style="left:81.5px;top:680.2px;font-size:21.8px;color:#2b2b2b;letter-spacing:0.11px;transform:scaleX(0.938);">Copiers</div>
<div class="t" style="left:315.8px;top:680.2px;font-size:21.1px;color:#2b2b2b;font-family:'DejaVu Sans Mono', 'Liberation Mono', monospace;transform:scaleX(0.913);">149.53</div>
<div class="t" style="left:473.6px;top:680.2px;font-size:21.1px;color:#2b2b2b;font-family:'DejaVu Sans Mono', 'Liberation Mono', monospace;transform:scaleX(0.913);">55.62</div>
<div class="t" style="left:72.1px;top:715.4px;font-size:21.8px;color:#1b1b1b;font-weight:700;letter-spacing:0.03px;transform:scaleX(0.915);">Furniture</div>
<div class="t" style="left:315.8px;top:715.5px;font-size:21.1px;color:#1b1b1b;font-weight:700;font-family:'DejaVu Sans Mono', 'Liberation Mono', monospace;transform:scaleX(0.913);">742.00</div>
<div class="t" style="left:472.7px;top:715.5px;font-size:21.1px;color:#1b1b1b;font-weight:700;font-family:'DejaVu Sans Mono', 'Liberation Mono', monospace;transform:scaleX(0.913);">18.45</div>
<div class="t" style="left:643.7px;top:715.5px;font-size:21.1px;color:#1b1b1b;font-weight:700;font-family:'DejaVu Sans Mono', 'Liberation Mono', monospace;transform:scaleX(0.913);">18/6/2024</div>
<div class="t" style="left:788.8px;top:715.5px;font-size:21.1px;color:#1b1b1b;font-weight:700;font-family:'DejaVu Sans Mono', 'Liberation Mono', monospace;transform:scaleX(0.913);">23/6/2024</div>
<div class="t" style="left:81.5px;top:747.2px;font-size:21.8px;color:#2b2b2b;letter-spacing:0.08px;transform:scaleX(0.938);">Chairs</div>
<div class="t" style="left:315.8px;top:747.2px;font-size:21.1px;color:#2b2b2b;font-family:'DejaVu Sans Mono', 'Liberation Mono', monospace;transform:scaleX(0.913);">328.45</div>
<div class="t" style="left:472.7px;top:747.2px;font-size:21.1px;color:#2b2b2b;font-family:'DejaVu Sans Mono', 'Liberation Mono', monospace;transform:scaleX(0.913);">26.59</div>
<div class="t" style="left:82.4px;top:779.4px;font-size:21.8px;color:#2b2b2b;letter-spacing:-0.13px;transform:scaleX(0.938);">Tables</div>
<div class="t" style="left:315.8px;top:779.5px;font-size:21.1px;color:#2b2b2b;font-family:'DejaVu Sans Mono', 'Liberation Mono', monospace;transform:scaleX(0.913);">206.97</div>
<div class="t" style="left:461.1px;top:779.5px;font-size:21.1px;color:#2b2b2b;font-family:'DejaVu Sans Mono', 'Liberation Mono', monospace;transform:scaleX(0.913);">-17.73</div>
<div class="t" style="left:81.5px;top:812.2px;font-size:21.8px;color:#2b2b2b;letter-spacing:-0.41px;transform:scaleX(0.938);">Bookcases</div>
<div class="t" style="left:315.8px;top:812.2px;font-size:21.1px;color:#2b2b2b;font-family:'DejaVu Sans Mono', 'Liberation Mono', monospace;transform:scaleX(0.913);">114.88</div>
<div class="t" style="left:472.7px;top:812.2px;font-size:21.1px;color:#2b2b2b;font-family:'DejaVu Sans Mono', 'Liberation Mono', monospace;transform:scaleX(0.913);">-3.47</div>
<div class="t" style="left:81.5px;top:844.5px;font-size:21.8px;color:#2b2b2b;letter-spacing:0.08px;transform:scaleX(0.938);">Furnishings</div>
<div class="t" style="left:327.4px;top:844.6px;font-size:21.1px;color:#2b2b2b;font-family:'DejaVu Sans Mono', 'Liberation Mono', monospace;transform:scaleX(0.913);">91.71</div>
<div class="t" style="left:472.7px;top:844.6px;font-size:21.1px;color:#2b2b2b;font-family:'DejaVu Sans Mono', 'Liberation Mono', monospace;transform:scaleX(0.913);">13.06</div>
<div class="t" style="left:73.0px;top:879.9px;font-size:21.8px;color:#1b1b1b;font-weight:700;letter-spacing:-0.03px;transform:scaleX(0.915);">Office Supplies</div>
<div class="t" style="left:315.8px;top:880.0px;font-size:21.1px;color:#1b1b1b;font-weight:700;font-family:'DejaVu Sans Mono', 'Liberation Mono', monospace;transform:scaleX(0.913);">719.05</div>
<div class="t" style="left:461.1px;top:880.0px;font-size:21.1px;color:#1b1b1b;font-weight:700;font-family:'DejaVu Sans Mono', 'Liberation Mono', monospace;transform:scaleX(0.913);">122.49</div>
<div class="t" style="left:643.7px;top:880.0px;font-size:21.1px;color:#1b1b1b;font-weight:700;font-family:'DejaVu Sans Mono', 'Liberation Mono', monospace;transform:scaleX(0.913);">25/6/2024</div>
<div class="t" style="left:788.8px;top:880.0px;font-size:21.1px;color:#1b1b1b;font-weight:700;font-family:'DejaVu Sans Mono', 'Liberation Mono', monospace;transform:scaleX(0.913);">30/6/2024</div>
<div class="t" style="left:82.4px;top:913.1px;font-size:21.8px;color:#2b2b2b;letter-spacing:-0.23px;transform:scaleX(0.938);">Storage</div>
<div class="t" style="left:315.8px;top:913.1px;font-size:21.1px;color:#2b2b2b;font-family:'DejaVu Sans Mono', 'Liberation Mono', monospace;transform:scaleX(0.913);">223.84</div>
<div class="t" style="left:472.7px;top:913.1px;font-size:21.1px;color:#2b2b2b;font-family:'DejaVu Sans Mono', 'Liberation Mono', monospace;transform:scaleX(0.913);">21.28</div>
<div class="t" style="left:81.5px;top:945.0px;font-size:21.8px;color:#2b2b2b;letter-spacing:0.24px;transform:scaleX(0.938);">Binders</div>
<div class="t" style="left:315.8px;top:945.1px;font-size:21.1px;color:#2b2b2b;font-family:'DejaVu Sans Mono', 'Liberation Mono', monospace;transform:scaleX(0.913);">203.41</div>
<div class="t" style="left:473.6px;top:945.1px;font-size:21.1px;color:#2b2b2b;font-family:'DejaVu Sans Mono', 'Liberation Mono', monospace;transform:scaleX(0.913);">30.22</div>
<div class="t" style="left:82.4px;top:977.3px;font-size:21.8px;color:#2b2b2b;letter-spacing:0.28px;transform:scaleX(0.938);">Appliances</div>
<div class="t" style="left:315.8px;top:977.4px;font-size:21.1px;color:#2b2b2b;font-family:'DejaVu Sans Mono', 'Liberation Mono', monospace;transform:scaleX(0.913);">107.53</div>
<div class="t" style="left:472.7px;top:977.4px;font-size:21.1px;color:#2b2b2b;font-family:'DejaVu Sans Mono', 'Liberation Mono', monospace;transform:scaleX(0.913);">18.14</div>
<div class="t" style="left:81.5px;top:1010.1px;font-size:21.8px;color:#2b2b2b;letter-spacing:-0.23px;transform:scaleX(0.938);">Paper</div>
<div class="t" style="left:327.4px;top:1010.2px;font-size:21.1px;color:#2b2b2b;font-family:'DejaVu Sans Mono', 'Liberation Mono', monospace;transform:scaleX(0.913);">78.48</div>
<div class="t" style="left:472.7px;top:1010.2px;font-size:21.1px;color:#2b2b2b;font-family:'DejaVu Sans Mono', 'Liberation Mono', monospace;transform:scaleX(0.913);">34.05</div>
<div class="t" style="left:82.4px;top:1042.4px;font-size:21.8px;color:#2b2b2b;letter-spacing:-0.02px;transform:scaleX(0.938);">Supplies</div>
<div class="t" style="left:327.4px;top:1042.5px;font-size:21.1px;color:#2b2b2b;font-family:'DejaVu Sans Mono', 'Liberation Mono', monospace;transform:scaleX(0.913);">46.67</div>
<div class="t" style="left:472.7px;top:1042.5px;font-size:21.1px;color:#2b2b2b;font-family:'DejaVu Sans Mono', 'Liberation Mono', monospace;transform:scaleX(0.913);">-1.19</div>
<div class="t" style="left:82.4px;top:1075.6px;font-size:21.8px;color:#2b2b2b;letter-spacing:1.24px;transform:scaleX(0.938);">Art</div>
<div class="t" style="left:328.3px;top:1075.7px;font-size:21.1px;color:#2b2b2b;font-family:'DejaVu Sans Mono', 'Liberation Mono', monospace;transform:scaleX(0.913);">27.12</div>
<div class="t" style="left:484.3px;top:1075.7px;font-size:21.1px;color:#2b2b2b;font-family:'DejaVu Sans Mono', 'Liberation Mono', monospace;transform:scaleX(0.913);">6.53</div>
<div class="t" style="left:81.5px;top:1107.9px;font-size:21.8px;color:#2b2b2b;letter-spacing:0.08px;transform:scaleX(0.938);">Envelopes</div>
<div class="t" style="left:327.4px;top:1108.0px;font-size:21.1px;color:#2b2b2b;font-family:'DejaVu Sans Mono', 'Liberation Mono', monospace;transform:scaleX(0.913);">16.48</div>
<div class="t" style="left:484.3px;top:1108.0px;font-size:21.1px;color:#2b2b2b;font-family:'DejaVu Sans Mono', 'Liberation Mono', monospace;transform:scaleX(0.913);">6.96</div>
<div class="t" style="left:81.5px;top:1140.7px;font-size:21.8px;color:#2b2b2b;transform:scaleX(0.938);">Labels</div>
<div class="t" style="left:327.4px;top:1140.8px;font-size:21.1px;color:#2b2b2b;font-family:'DejaVu Sans Mono', 'Liberation Mono', monospace;transform:scaleX(0.913);">12.49</div>
<div class="t" style="left:484.3px;top:1140.8px;font-size:21.1px;color:#2b2b2b;font-family:'DejaVu Sans Mono', 'Liberation Mono', monospace;transform:scaleX(0.913);">5.55</div>
<div class="t" style="left:81.5px;top:1173.0px;font-size:21.8px;color:#2b2b2b;letter-spacing:-0.23px;transform:scaleX(0.938);">Fasteners</div>
<div class="t" style="left:339.9px;top:1173.1px;font-size:21.1px;color:#2b2b2b;font-family:'DejaVu Sans Mono', 'Liberation Mono', monospace;transform:scaleX(0.913);">3.02</div>
<div class="t" style="left:484.3px;top:1173.1px;font-size:21.1px;color:#2b2b2b;font-family:'DejaVu Sans Mono', 'Liberation Mono', monospace;transform:scaleX(0.913);">0.95</div>
<div class="t" style="left:66.6px;top:424.4px;font-size:21.8px;color:#2b2b2b;letter-spacing:0.28px;transform:scaleX(0.954);">Category</div>
<div class="t" style="left:269.8px;top:415.4px;font-size:21.8px;color:#2b2b2b;letter-spacing:-0.50px;transform:scaleX(0.954);">Sum of Sales</div>
<div class="t" style="left:285.9px;top:442.1px;font-size:18.31px;color:#2b2b2b;letter-spacing:-0.02px;transform:scaleX(0.936);">in Thousands</div>
<div class="t" style="left:410.5px;top:415.2px;font-size:21.8px;color:#2b2b2b;letter-spacing:0.25px;transform:scaleX(0.954);">Sum of Profit</div>
<div class="t" style="left:430.7px;top:441.9px;font-size:18.31px;color:#2b2b2b;letter-spacing:0.02px;transform:scaleX(0.936);">in Thousands</div>
<div class="t" style="left:620.2px;top:427.3px;font-size:21.8px;color:#2b2b2b;transform:scaleX(0.954);">Shipping Date</div>
<div class="t" style="left:790.3px;top:414.0px;font-size:21.8px;color:#2b2b2b;letter-spacing:-0.27px;transform:scaleX(0.954);">Ending Day</div>
<div class="t" style="left:785.0px;top:439.7px;font-size:21.8px;color:#2b2b2b;transform:scaleX(0.954);">of the Week</div>
<div class="t" style="left:8.3px;top:1258.6px;font-size:21.08px;color:#2b2b2b;letter-spacing:0.14px;">Total rows: 21</div>
<div class="t" style="left:1268.1px;top:1263.9px;font-size:20.6px;color:#333;font-family:'DejaVu Sans Mono', 'Liberation Mono', monospace;transform:scaleX(0.957);">100</div>
<div class="t" style="left:1308.0px;top:1264.2px;font-size:21.08px;color:#333;transform:scaleX(0.889);">%</div>
<div class="t" style="left:1426.0px;top:1258.6px;font-size:21.08px;color:#2b2b2b;letter-spacing:-0.04px;transform:scaleX(0.993);">21 records</div>
<div class="t" style="left:1597.3px;top:1258.6px;font-size:21.08px;color:#2b2b2b;letter-spacing:0.04px;transform:scaleX(0.993);">Page 1 of 1</div>
<div class="t" style="left:1843.0px;top:47.3px;font-size:35.32px;color:#252423;transform:scaleX(0.985);">Formula Measure</div>
<div class="t" style="left:1789.6px;top:141.5px;font-size:23.26px;color:#2b2b2b;-webkit-text-stroke:0.55px #2b2b2b;letter-spacing:0.75px;transform:scaleX(0.926);">Title</div>
<div class="t" style="left:1837.6px;top:142.5px;font-size:28px;color:#a01818;font-weight:700;transform:scaleX(0.800);">*</div>
<div class="t" style="left:1812.1px;top:199.0px;font-size:23.26px;color:#333;transform:scaleX(0.889);">Ending Day of the Week</div>
<div class="t" style="left:1788.7px;top:264.5px;font-size:23.26px;color:#2b2b2b;-webkit-text-stroke:0.55px #2b2b2b;letter-spacing:-0.20px;transform:scaleX(0.926);">Formula</div>
<div class="t" style="left:1873.2px;top:265.5px;font-size:28px;color:#a01818;font-weight:700;transform:scaleX(0.800);">*</div>
<div class="t" style="left:1797.2px;top:323.2px;font-size:23.26px;color:#1272c4;transform:scaleX(0.807);">EOWEEK</div>
<div class="t" style="left:1879.8px;top:323.2px;font-size:23.26px;color:#333;transform:scaleX(0.939);">(</div>
<div class="t" style="left:1887.6px;top:323.2px;font-size:23.26px;color:#1272c4;transform:scaleX(0.939);">[Shipping Date]</div>
<div class="t" style="left:2037.5px;top:323.2px;font-size:23.26px;color:#333;transform:scaleX(0.939);">)</div>
<div class="t" style="left:1817.4px;top:497.0px;font-size:20.06px;color:#555;font-weight:700;letter-spacing:0.23px;transform:scaleX(0.896);">Example</div>
<div class="t" style="left:1895.2px;top:497.0px;font-size:20.06px;color:#666;transform:scaleX(0.957);">:</div>
<div class="t" style="left:1910.9px;top:497.0px;font-size:20.06px;color:#666;font-style:italic;transform:scaleX(0.973);">[Sum of Sales] + [Sum of Profit]</div>
<div class="t" style="left:1817.3px;top:527.0px;font-size:20.06px;color:#666;letter-spacing:-0.90px;transform:scaleX(0.957);">Use</div>
<div class="t" style="left:1855.0px;top:527.0px;font-size:20.06px;color:#555;font-weight:700;letter-spacing:-0.18px;transform:scaleX(0.896);">Ctrl + Space</div>
<div class="t" style="left:1962.5px;top:527.0px;font-size:20.06px;color:#666;transform:scaleX(0.957);">to open suggestion, also select any</div>
<div class="t" style="left:1818.3px;top:557.3px;font-size:20.06px;color:#666;letter-spacing:0.27px;transform:scaleX(0.957);">column or cell to insert the reference</div>
<div class="t" style="left:1788.7px;top:614.1px;font-size:23.26px;color:#2b2b2b;-webkit-text-stroke:0.55px #2b2b2b;letter-spacing:-0.11px;transform:scaleX(0.926);">Row aggregation type</div>
<div class="t" style="left:2002.0px;top:615.1px;font-size:28px;color:#a01818;font-weight:700;transform:scaleX(0.800);">*</div>
<div class="t" style="left:1808.1px;top:671.8px;font-size:22.38px;color:#2b2b2b;transform:scaleX(0.937);">Formula</div>
<div class="t" style="left:1788.7px;top:737.5px;font-size:23.26px;color:#2b2b2b;-webkit-text-stroke:0.55px #2b2b2b;letter-spacing:0.11px;transform:scaleX(0.926);">Description</div>
<div class="t" style="left:1798.0px;top:787.8px;font-size:24.71px;color:#a9a9a9;transform:scaleX(0.955);">Briefly describe the formula</div>
<div class="t" style="left:1999.5px;top:1223.5px;font-size:24.71px;color:#252423;transform:scaleX(0.941);">Cancel</div>
<div class="t" style="left:2157.3px;top:1223.5px;font-size:24.71px;color:#fff;-webkit-text-stroke:0.55px #fff;transform:scaleX(0.950);">Update</div>
<div class="t" style="left:874.6px;top:90.6px;font-size:19.5px;color:#fff;font-weight:700;transform:scaleX(0.964);">2</div>
</div>
</body></html>
